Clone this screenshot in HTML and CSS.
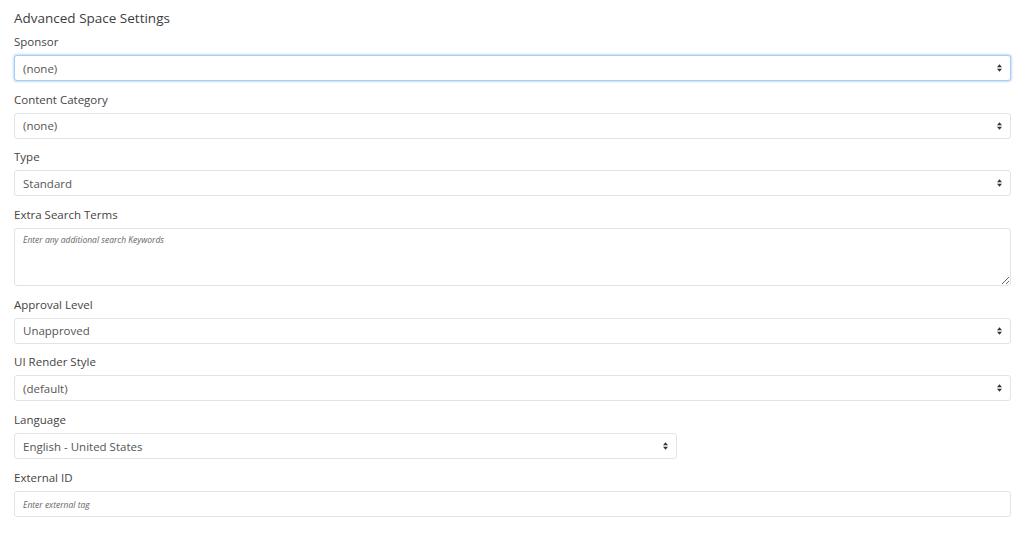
FILE: index.html
```html
<!DOCTYPE html>
<html lang="en">
<head>
    <meta charset="UTF-8">
    <meta name="viewport" content="width=device-width, initial-scale=1.0">
    <title>Advanced Space Settings</title>
    <link rel="stylesheet" href="styles.css">
</head>
<body>
    <div class="settings">
        <h3>Advanced Space Settings</h3>

        <div class="field">
            <label>Sponsor</label>
            <div class="select-wrap">
                <select class="control focused">
                    <option>(none)</option>
                </select>
                <svg class="caret" width="5" height="8" viewBox="0 0 6 9"><path d="M3 0L6 3.5H0z M3 9L0 5.5H6z" fill="#333"/></svg>
            </div>
        </div>

        <div class="field">
            <label>Content Category</label>
            <div class="select-wrap">
                <select class="control">
                    <option>(none)</option>
                </select>
                <svg class="caret" width="5" height="8" viewBox="0 0 6 9"><path d="M3 0L6 3.5H0z M3 9L0 5.5H6z" fill="#333"/></svg>
            </div>
        </div>

        <div class="field">
            <label>Type</label>
            <div class="select-wrap">
                <select class="control">
                    <option>Standard</option>
                </select>
                <svg class="caret" width="5" height="8" viewBox="0 0 6 9"><path d="M3 0L6 3.5H0z M3 9L0 5.5H6z" fill="#333"/></svg>
            </div>
        </div>

        <div class="field">
            <label>Extra Search Terms</label>
            <textarea class="control area" placeholder="Enter any additional search Keywords"></textarea>
        </div>

        <div class="field">
            <label>Approval Level</label>
            <div class="select-wrap">
                <select class="control">
                    <option>Unapproved</option>
                </select>
                <svg class="caret" width="5" height="8" viewBox="0 0 6 9"><path d="M3 0L6 3.5H0z M3 9L0 5.5H6z" fill="#333"/></svg>
            </div>
        </div>

        <div class="field">
            <label>UI Render Style</label>
            <div class="select-wrap">
                <select class="control">
                    <option>(default)</option>
                </select>
                <svg class="caret" width="5" height="8" viewBox="0 0 6 9"><path d="M3 0L6 3.5H0z M3 9L0 5.5H6z" fill="#333"/></svg>
            </div>
        </div>

        <div class="field">
            <label>Language</label>
            <div class="select-wrap narrow">
                <select class="control">
                    <option>English - United States</option>
                </select>
                <svg class="caret" width="5" height="8" viewBox="0 0 6 9"><path d="M3 0L6 3.5H0z M3 9L0 5.5H6z" fill="#333"/></svg>
            </div>
        </div>

        <div class="field">
            <label>External ID</label>
            <input class="control" type="text" placeholder="Enter external tag">
        </div>
    </div>
</body>
</html>
```

FILE: styles.css
```css
body {
    font-family: "Open Sans", sans-serif;
    margin: 0;
    padding: 8px 13px 0 14px;
    background: #fff;
    color: #444;
}

h3 {
    font-size: 13.5px;
    font-weight: 400;
    line-height: 20px;
    margin: 0 0 5px;
    color: #3d3d3d;
}

.field {
    margin-bottom: 9.7px;
}

.field label {
    display: block;
    font-size: 11.5px;
    line-height: 18px;
    margin-bottom: 4px;
    color: #444;
}

.select-wrap {
    position: relative;
}

.select-wrap.narrow {
    width: 663px;
}

.control {
    display: block;
    width: 100%;
    box-sizing: border-box;
    height: 26px;
    margin: 0;
    padding: 0 8px;
    border: 1px solid #e2e3e5;
    border-radius: 3px;
    background: #fff;
    font-family: "Open Sans", sans-serif;
    font-size: 11.5px;
    color: #555;
    outline: none;
    -webkit-appearance: none;
    appearance: none;
}

.control.focused {
    border-color: #a6cdf5;
    box-shadow: 0 0 2px 1px rgba(130, 180, 240, 0.45);
}

.caret {
    position: absolute;
    right: 9px;
    top: 9px;
    pointer-events: none;
}

.area {
    height: 58px;
    padding: 5px 8px;
    resize: vertical;
}

.control::placeholder {
    font-style: italic;
    font-size: 8.5px;
    color: #666;
}
```
